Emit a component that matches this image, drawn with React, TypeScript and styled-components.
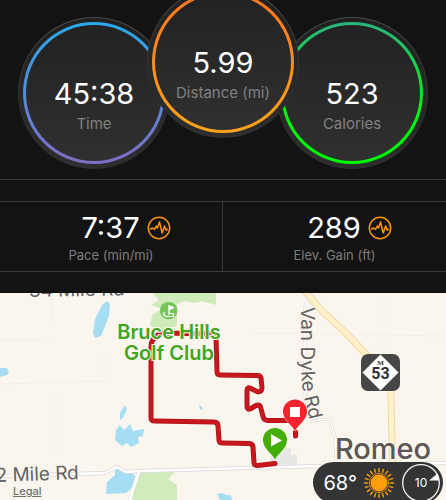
import React from "react";
import styled, { createGlobalStyle } from "styled-components";

const GlobalStyle = createGlobalStyle`
  *, *::before, *::after { box-sizing: border-box; }
  body {
    margin: 0;
    background: #131313;
    color: #fff;
    font-family: Inter, Roboto, "Liberation Sans", sans-serif;
  }
`;

const Page = styled.main`
  display: flex;
  flex-direction: column;
  min-height: 100vh;
  overflow: hidden;
`;

const Gauges = styled.section`
  display: flex;
  justify-content: center;
  padding: 17px 0 10px;
`;

const Gauge = styled.div<{ $raised?: boolean }>`
  display: flex;
  flex: none;
  width: 152px;
  height: 152px;
  padding: 4px;
  border-radius: 50%;
  border: 1px solid transparent;
  background:
    linear-gradient(#202020, #2e2e2e) padding-box,
    linear-gradient(#4a4a4a, #2e2e2e 60%) border-box;
  ${(p) => p.$raised && "position: relative; z-index: 1; margin: -31px -23px 0;"}
`;

const Ring = styled.div<{ $from: string; $to: string }>`
  display: flex;
  flex: 1;
  flex-direction: column;
  align-items: center;
  gap: 4px;
  padding-top: 53px;
  border: 3px solid transparent;
  border-radius: 50%;
  background:
    linear-gradient(#222, #303030) padding-box,
    linear-gradient(${(p) => p.$from}, ${(p) => p.$to}) border-box;
`;

const Value = styled.span`
  font-size: 29px;
  font-weight: 400;
  line-height: 32px;
  white-space: nowrap;
`;

const GaugeLabel = styled.span`
  color: #808080;
  font-size: 15px;
  line-height: 20px;
  white-space: nowrap;
`;

const Stats = styled.section`
  display: grid;
  grid-template-columns: 1fr 1fr;
  margin-bottom: 21px;
  border-top: 1px solid #404040;
  border-bottom: 1px solid #3a3a3a;
`;

const Band = styled.div`
  height: 22px;
  border-top: 1px solid #3a3a3a;
`;

const Stat = styled.div`
  display: flex;
  flex-direction: column;
  align-items: center;
  gap: 2px;
  padding: 10px 0 7px;
  border-right: 1px solid #3a3a3a;
  &:last-child { border-right: 0; }
`;

const StatRow = styled.div`
  display: flex;
  align-items: center;
  gap: 7px;
  padding-left: 30px;
`;

const StatLabel = styled.span`
  color: #7c7c7c;
  font-size: 13px;
  line-height: 18px;
`;

const ChartButton = styled.button`
  display: flex;
  padding: 0;
  border: 0;
  background: none;
  cursor: pointer;
`;

const MapPanel = styled.section`
  position: relative;
  display: flex;
  flex: 1;
  min-height: 207px;
  overflow: hidden;
  background: #faf6ee;
`;

const MapDrawing = styled.svg`
  display: block;
  width: 100%;
  flex: 1;
  font-family: Inter, Roboto, sans-serif;
`;

const Legal = styled.a`
  position: absolute;
  left: 13px;
  bottom: 2px;
  color: #6f6f6f;
  font-size: 11px;
  font-weight: 500;
  line-height: 14px;
  text-decoration: underline;
`;

const Weather = styled.div`
  position: absolute;
  right: 3px;
  bottom: -3px;
  display: flex;
  align-items: center;
  gap: 7px;
  height: 41px;
  padding: 0 2px 0 10px;
  border-radius: 21px;
  background: #343434;
`;

const Temperature = styled.span`
  font-size: 20px;
  line-height: 24px;
`;

const Wind = styled.div`
  display: grid;
  place-items: center;
  & > * { grid-area: 1 / 1; }
`;

const WindSpeed = styled.span`
  font-size: 12px;
  line-height: 14px;
`;

const ChartIcon = () => (
  <svg width="24" height="24" viewBox="0 0 24 24" fill="none" stroke="#f7930d" aria-hidden="true">
    <circle cx="12" cy="12" r="10.7" strokeWidth="1.5" />
    <path d="M3 13.200l2.500-1.200 2 1.400 1.800-3.400 1.200 2L12.500 6l2.700 11 2.400-7 1.600 4.200 1.600-1.400" strokeWidth="1.5" strokeLinejoin="round" />
  </svg>
);

const rays = Array.from({ length: 20 }, (_, i) => i * 18);

const SunIcon = () => (
  <svg width="30" height="30" viewBox="1 1 30 30" aria-label="Sunny" role="img">
    <circle cx="16" cy="16" r="8.4" fill="#ff9d0a" />
    <circle cx="16" cy="16" r="9.6" fill="none" stroke="#ff9d0a" strokeWidth="0.8" />
    {rays.map((angle) => (
      <path key={angle} d="M16 5.2V1" stroke="#ff9d0a" strokeWidth="1.4" transform={`rotate(${angle} 16 16)`} />
    ))}
  </svg>
);

const WindDial = () => (
  <svg width="40" height="40" viewBox="0 0 40 40" aria-hidden="true">
    <circle cx="20" cy="20" r="18.3" fill="none" stroke="#f2f2f2" strokeWidth="1.3" />
    <path d="M28 17.500l8.500-7 1.800 7z" fill="#fff" />
  </svg>
);

const gauges = [
  { value: "45:38", label: "Time", from: "#29a9ec", to: "#806dc4" },
  { value: "5.99", label: "Distance (mi)", from: "#ff741f", to: "#ffa41b", raised: true },
  { value: "523", label: "Calories", from: "#2bb57c", to: "#00fa08 70%" },
];

const stats = [
  { value: "7:37", label: "Pace (min/mi)" },
  { value: "289", label: "Elev. Gain (ft)" },
];

const routePath =
  "M295.500 432v4M290 420.500h-22q-4 0-5-4l-2-8q-1-5-5-3l-5 3q-4 2-4-2v-16q0-4 4-2l6 3q5 1 5-4l-1-9q0-3-4-3l-37-.5q-3 0-3-4l-1-34q0-3-3-3l-50-1q-4 0-7 4-5 3-5 9v72q0 3 4 3l59 1q4 0 4 4l1 14q0 3 4 3l26 .5q4 0 4 4l1 15q0 3 4 3l17-2";

const RouteMap = () => (
  <MapDrawing viewBox="0 293 446 207" preserveAspectRatio="xMidYMin slice" role="img" aria-label="Route map">
    <rect y="293" width="446" height="207" fill="#faf6ee" />

    <g fill="none" stroke="#f4eee6">
      <path d="M0 340l52-1M0 384l106-3M56 391v66M52 294v27M104 352v30M250 333l196 3M384 294v60" />
    </g>

    <g fill="#cfebba">
      <path d="M152 293h64v12l-14-4-8 2-9-2-8 3v22l-14 4-13-4 2-11 10-6-11-4 8-5z" />
      <path d="M139 472l37-1-8 8 9 6v15h-47z" />
    </g>
    <path d="M270 457l9-9h12v7h6v10h-25z" fill="#e9e7e6" />

    <g fill="#a5ddf3">
      <path d="M107 301l3 3-1 12-8 20-6 2-2-5 2-14 7-14z" />
      <path d="M0 368l7 0 2 4-2 3-7 2z" />
      <path d="M125 405l2 4-4 9-3 2v-7z" />
      <path d="M120 425l4 5 6-6 3 7 11-2-1 7-5 1 1 6-8 4-4-4-5 3-7-6 1-10z" />
      <path d="M115 470l5-2 5 4 6-1 4 5-1 10-8 7-20 1 1-12 8-7z" />
      <path d="M217 494l5-1 4 2 4 0 3 5h-13z" />
      <path d="M199 405l3 2 1 3-3-1z" />
    </g>

    <g fill="none" strokeLinejoin="round">
      <path d="M0 476l105-3 12-6 9 5 14-1 180-5 126-3" stroke="#dcdad7" strokeWidth="4" />
      <path d="M0 476l105-3 12-6 9 5 14-1 180-5 126-3" stroke="#fff" strokeWidth="2.4" />
      <path d="M139 472l-6 17-3 11" stroke="#dcdad7" strokeWidth="4" />
      <path d="M139 472l-6 17-3 11" stroke="#fff" strokeWidth="3" />
      <path d="M311 297l-6 10v90l6 24 19-2 5 19 1 24" stroke="#dedad6" strokeWidth="3" />
      <path d="M311 297l-6 10v90l6 24 19-2 5 19 1 24" stroke="#fff" strokeWidth="1.6" />
      <path d="M304 290l19 22 22 20 21 22 20 20 5 18 2 108" stroke="#f2d8a8" strokeWidth="7" />
      <path d="M304 290l19 22 22 20 21 22 20 20 5 18 2 108" stroke="#fff2c8" strokeWidth="5" />
    </g>

    <path d={routePath} fill="none" stroke="#b0121a" strokeWidth="5" strokeLinecap="round" strokeLinejoin="round" />
    <path d={routePath} fill="none" stroke="#c9171e" strokeWidth="3.4" strokeLinecap="round" strokeLinejoin="round" />

    <circle cx="168.700" cy="310.500" r="8.800" fill="#78c65b" />
    <path d="M168 305.500l6 2-5 2.500v5" fill="#fff" stroke="#fff" strokeWidth="1" />
    <path d="M164.500 312l-1 3 3 1.500h7v-2.500l-5-1" fill="none" stroke="#fff" strokeWidth="1.200" />

    <g fill="#626262" stroke="#faf6ee" strokeWidth="2" paintOrder="stroke" fontSize="19">
      <text x="29" y="297" transform="rotate(-1 29 297)">34 Mile Rd</text>
      <text x="79" y="479" textAnchor="end" transform="rotate(-2 79 479)">2 Mile Rd</text>
      <path id="van-dyke" d="M301 307v50Q301 385 304 397L316 445" fill="none" stroke="none" />
      <text><textPath href="#van-dyke">Van Dyke Rd</textPath></text>
    </g>
    <text x="383" y="459" textAnchor="middle" fontSize="29" fontWeight="500" fill="#5a5755" stroke="#faf6ee" strokeWidth="2" paintOrder="stroke">Romeo</text>
    <g fill="#43a51c" stroke="#faf6ee" strokeWidth="2" paintOrder="stroke" fontSize="20" fontWeight="600" textAnchor="middle">
      <text x="169" y="339">Bruce Hills</text>
      <text x="169" y="360">Golf Club</text>
    </g>

    <g>
      <rect x="361" y="354" width="39" height="37" rx="7" fill="#464646" />
      <path d="M380.500 354.500l18 18-18 18-18-18z" fill="#fff" />
      <g fill="#303030" fontWeight="700" textAnchor="middle">
        <text x="380.500" y="365" fontSize="7" fontFamily="Liberation Serif, serif">M</text>
        <text x="380.500" y="379" fontSize="16" fontFamily="Roboto, sans-serif">53</text>
      </g>
    </g>

    <g stroke="#faf6ee" strokeWidth="1" paintOrder="stroke">
      <path d="M295 431c-3-6-12-11-12-19.500a12 12 0 0 1 24 0c0 8.500-9 13.500-12 19.500z" fill="#fb2230" />
      <path d="M275 459.500c-3-6-12-11-12-19.500a12 12 0 0 1 24 0c0 8.500-9 13.500-12 19.500z" fill="#43ae05" />
    </g>
    <rect x="290" y="407" width="10" height="10" fill="#fff" />
    <path d="M271 434l11 6.500-11 6z" fill="#fff" />
  </MapDrawing>
);

export default function App() {
  return (
    <>
      <GlobalStyle />
      <Page>
        <Gauges>
          {gauges.map((g) => (
            <Gauge key={g.label} $raised={g.raised}>
              <Ring $from={g.from} $to={g.to}>
                <Value>{g.value}</Value>
                <GaugeLabel>{g.label}</GaugeLabel>
              </Ring>
            </Gauge>
          ))}
        </Gauges>
        <Band />
        <Stats>
          {stats.map((s) => (
            <Stat key={s.label}>
              <StatRow>
                <Value>{s.value}</Value>
                <ChartButton aria-label={`${s.label} chart`}>
                  <ChartIcon />
                </ChartButton>
              </StatRow>
              <StatLabel>{s.label}</StatLabel>
            </Stat>
          ))}
        </Stats>
        <MapPanel>
          <RouteMap />
          <Legal href="#legal">Legal</Legal>
          <Weather>
            <Temperature>68°</Temperature>
            <SunIcon />
            <Wind>
              <WindDial />
              <WindSpeed>10</WindSpeed>
            </Wind>
          </Weather>
        </MapPanel>
      </Page>
    </>
  );
}
